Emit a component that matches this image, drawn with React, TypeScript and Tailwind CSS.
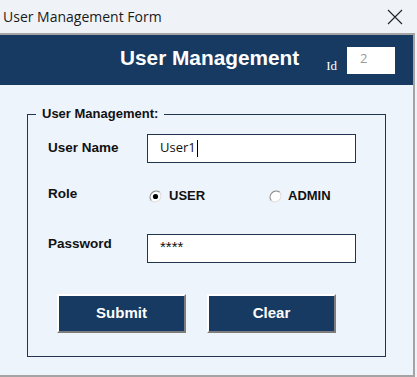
import React from "react";

const arial = { fontFamily: '"Liberation Sans", Arial, sans-serif' };

function Radio({ checked }: { checked: boolean }) {
  return (
    <svg width="13" height="13" viewBox="0 0 13 13" aria-hidden="true">
      <circle cx="6.5" cy="6.5" r="6" fill="#ffffff" />
      <path d="M2.3 10.7 A6 6 0 0 1 10.7 2.3" fill="none" stroke="#8a8a8a" strokeWidth="1.2" />
      <path d="M10.7 2.3 A6 6 0 0 1 2.3 10.7" fill="none" stroke="#dcdcdc" strokeWidth="1.2" />
      {checked && <circle cx="6.5" cy="6.5" r="2.6" fill="#000000" />}
    </svg>
  );
}

export default function App() {
  return (
    <div className="w-[417px] h-[377px] bg-[#eff3f8] overflow-hidden flex flex-col">
      {/* Window title bar */}
      <div className="h-[33px] flex items-center justify-between pl-[3px] pr-[14px]">
        <span className="text-[14px] text-[#1a1a1a] font-['Open_Sans',sans-serif]">User Management Form</span>
        <svg width="16" height="16" viewBox="0 0 16 16" aria-hidden="true">
          <path d="M1 1 L15 15 M15 1 L1 15" stroke="#222" strokeWidth="1.1" />
        </svg>
      </div>

      {/* Window body */}
      <div className="w-[415px] flex-1 flex flex-col border-t-2 border-r-2 border-b-2 border-[#a4a4a4] bg-[#edf4fb]">
        {/* Header band */}
        <div className="h-[50px] bg-[#163a62] flex items-center justify-end pr-[18px]">
          <span className="text-[20.8px] font-bold text-white mb-[4px]" style={arial}>
            User Management
          </span>
          <span className="ml-[27px] mt-[12px] text-[13px] text-white font-['Liberation_Serif',serif]">Id</span>
          <div className="ml-[10px] w-[48px] h-[27px] bg-white pl-[13px] pt-[2px] text-[13px] text-[#9a9a9a] font-['Open_Sans',sans-serif]">
            2
          </div>
        </div>

        <div className="pt-[21px] pl-[27px]">
          <fieldset className="w-[359px] border border-[#1f3550] pb-[23px]" style={arial}>
            <legend className="ml-[8px] px-[6px] text-[13px] font-bold text-[#111] leading-[16px]">
              User Management:
            </legend>

            <div className="mt-[12px] flex items-start">
              <span className="w-[119px] pl-[20px] mt-[4px] text-[13.5px] font-bold text-[#111]">User Name</span>
              <div className="w-[209px] h-[29px] border border-[#1f3550] bg-white pl-[12px] pt-[3px] flex items-start text-[13px] text-[#111] font-['Open_Sans',sans-serif]">
                User1
                <span className="ml-[1px] mt-[2px] h-[17px] border-l border-black" />
              </div>
            </div>

            <div className="mt-[24px] h-[16px] flex items-center">
              <span className="w-[119px] pl-[20px] text-[13.5px] font-bold text-[#111] mb-[1px]">Role</span>
              <div className="w-[122px] flex items-center pl-[2px] mt-[2px]">
                <Radio checked />
                <span className="ml-[7px] text-[13px] font-bold text-[#111]">USER</span>
              </div>
              <div className="flex items-center mt-[2px]">
                <Radio checked={false} />
                <span className="ml-[6px] text-[13px] font-bold text-[#111]">ADMIN</span>
              </div>
            </div>

            <div className="mt-[31px] flex items-start">
              <span className="w-[119px] pl-[20px] text-[13.5px] font-bold text-[#111]">Password</span>
              <div className="w-[209px] h-[29px] border border-[#1f3550] bg-white pl-[12px] pt-[1px] text-[15px] text-[#111]">
                ****
              </div>
            </div>

            <div className="mt-[31px] pl-[29px] flex gap-[21px]">
              <button className="w-[129px] h-[39px] bg-[#163a62] border-2 border-t-white border-l-white border-b-[#7d7d7d] border-r-[#7d7d7d] text-white text-[15px] font-bold">
                Submit
              </button>
              <button className="w-[129px] h-[39px] bg-[#163a62] border-2 border-t-white border-l-white border-b-[#7d7d7d] border-r-[#7d7d7d] text-white text-[15px] font-bold">
                Clear
              </button>
            </div>
          </fieldset>
        </div>
      </div>
    </div>
  );
}
